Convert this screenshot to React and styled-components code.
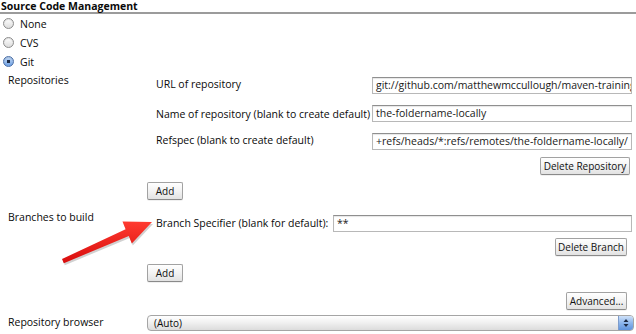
import React from "react";
import styled, { createGlobalStyle } from "styled-components";

const GlobalStyle = createGlobalStyle`
  html, body {
    margin: 0;
    padding: 0;
    background: #fff;
  }
  body {
    font-family: "Open Sans", "DejaVu Sans", sans-serif;
    font-size: 10.5px;
    color: #0a0a0a;
  }
`;

const Page = styled.div`
  position: relative;
  width: 636px;
  height: 334px;
  overflow: hidden;
  display: flex;
  flex-direction: column;
`;

const Header = styled.div`
  font-weight: 700;
  font-size: 10.5px;
  line-height: 12px;
  padding-left: 1px;
  border-bottom: 2px solid #9b9b9b;
`;

const RadioList = styled.div`
  display: flex;
  flex-direction: column;
`;

const RadioRow = styled.label`
  display: flex;
  align-items: center;
  gap: 6px;
  height: 19px;
  padding-left: 3px;
`;

const RadioDot = styled.span`
  width: 11px;
  height: 11px;
  box-sizing: border-box;
  border-radius: 50%;
  border: 1px solid ${(p) => (p.$on ? "#4a6fa8" : "#8d8d8d")};
  background: ${(p) =>
    p.$on
      ? "radial-gradient(circle at 50% 50%, #1c2a44 0 1.6px, transparent 2px), linear-gradient(#c4daf6, #6d9fe2)"
      : "linear-gradient(#ffffff, #dcdcdc)"};
  box-shadow: inset 0 1px 1px rgba(0, 0, 0, 0.12);
`;

const Section = styled.div`
  display: grid;
  grid-template-columns: 147px 1fr;
  padding-right: 4px;
`;

const SideLabel = styled.div`
  padding-left: 8px;
  padding-top: ${(p) => p.$top || 0}px;
  line-height: 14px;
  align-self: start;
`;

const Content = styled.div`
  display: flex;
  flex-direction: column;
  padding-top: ${(p) => p.$top || 0}px;
`;

const FieldTable = styled.div`
  display: grid;
  grid-template-columns: ${(p) => p.$label}px 1fr;
  row-gap: 11px;
  padding-left: 9px;
  align-items: center;
`;

const FieldLabel = styled.div`
  line-height: 14px;
  white-space: nowrap;
  margin-top: ${(p) => p.$shift || 0}px;
`;

const TextInput = styled.div`
  height: 17px;
  box-sizing: border-box;
  border: 1px solid #b8b8b8;
  border-top-color: #8f8f8f;
  box-shadow: inset 0 1px 1px rgba(0, 0, 0, 0.1);
  background: #fff;
  padding: 0 3px;
  line-height: 15px;
  font-size: 10.5px;
  color: #1a1a1a;
  white-space: nowrap;
  overflow: hidden;
`;

const ButtonRow = styled.div`
  display: flex;
  justify-content: ${(p) => (p.$end ? "flex-end" : "flex-start")};
  margin-top: ${(p) => p.$top || 0}px;
  padding-right: ${(p) => p.$right || 0}px;
`;

const Button = styled.button`
  width: ${(p) => p.$w}px;
  height: 18px;
  padding: 0;
  border: 1px solid #a2a2a2;
  border-bottom-color: #8a8a8a;
  border-radius: 2px;
  background: linear-gradient(#ffffff 0%, #f3f3f3 50%, #e2e2e2 100%);
  box-shadow: 0 1px 0 rgba(0, 0, 0, 0.06);
  font-family: "Open Sans", "DejaVu Sans", sans-serif;
  font-size: 10px;
  color: #111;
  line-height: 16px;
`;

const BrowserRow = styled.div`
  display: grid;
  grid-template-columns: 147px 1fr;
  align-items: center;
  margin-top: 5px;
  padding-right: 2px;
`;

const SelectBox = styled.div`
  height: 16px;
  box-sizing: border-box;
  border: 1px solid #a5a5a5;
  border-radius: 4px;
  background: linear-gradient(#ffffff 0%, #f1f1f1 45%, #dcdcdc 100%);
  display: flex;
  align-items: center;
  padding-left: 6px;
  font-size: 10px;
  line-height: 14px;
  overflow: hidden;
`;

const SelectText = styled.span`
  flex: 1;
`;

const Stepper = styled.span`
  width: 14px;
  height: 100%;
  border-left: 1px solid #7d9ccc;
  background: linear-gradient(#cfe1f8 0%, #8db6ec 50%, #5f93dc 100%);
  display: flex;
  align-items: center;
  justify-content: center;
`;

const ArrowLayer = styled.svg`
  position: absolute;
  left: 0;
  top: 0;
  pointer-events: none;
`;

const arrowPoints =
  "152,222 122.5,221.5 125.6,229.3 62,259 63.8,263.2 128.8,236 131.8,243.5";

const Field = ({ label, value, shift }) => (
  <>
    <FieldLabel $shift={shift}>{label}</FieldLabel>
    <TextInput>{value}</TextInput>
  </>
);

export default function App() {
  return (
    <Page>
      <GlobalStyle />
      <Header>Source Code Management</Header>
      <RadioList>
        <RadioRow>
          <RadioDot />
          None
        </RadioRow>
        <RadioRow>
          <RadioDot />
          CVS
        </RadioRow>
        <RadioRow>
          <RadioDot $on />
          Git
        </RadioRow>
      </RadioList>

      <Section>
        <SideLabel $top={2}>Repositories</SideLabel>
        <Content $top={6}>
          <FieldTable $label={216}>
            <Field label="URL of repository" value="git://github.com/matthewmccullough/maven-training" shift={-3} />
            <Field label="Name of repository (blank to create default)" value="the-foldername-locally" />
            <Field label="Refspec (blank to create default)" value="+refs/heads/*:refs/remotes/the-foldername-locally/" shift={-3} />
          </FieldTable>
          <ButtonRow $end $top={7} $right={2}>
            <Button $w={90}>Delete Repository</Button>
          </ButtonRow>
          <ButtonRow $top={7}>
            <Button $w={36}>Add</Button>
          </ButtonRow>
        </Content>

        <SideLabel $top={10}>Branches to build</SideLabel>
        <Content $top={15}>
          <FieldTable $label={177}>
            <Field label="Branch Specifier (blank for default):" value="**" shift={-1} />
          </FieldTable>
          <ButtonRow $end $top={6} $right={5}>
            <Button $w={72}>Delete Branch</Button>
          </ButtonRow>
          <ButtonRow $top={8}>
            <Button $w={36}>Add</Button>
          </ButtonRow>
        </Content>
      </Section>

      <ButtonRow $end $top={10} $right={9}>
        <Button $w={61}>Advanced...</Button>
      </ButtonRow>

      <BrowserRow>
        <SideLabel>Repository browser</SideLabel>
        <SelectBox>
          <SelectText>(Auto)</SelectText>
          <Stepper>
            <svg width="6" height="10" viewBox="0 0 6 10">
              <path d="M3 1 L5.5 4 H0.5 Z M3 9 L5.5 6 H0.5 Z" fill="#1d2b45" />
            </svg>
          </Stepper>
        </SelectBox>
      </BrowserRow>

      <ArrowLayer width="636" height="334" viewBox="0 0 636 334">
        <defs>
          <linearGradient id="redArrow" x1="0" y1="0" x2="0" y2="1">
            <stop offset="0" stopColor="#ff3b30" />
            <stop offset="1" stopColor="#d80d0d" />
          </linearGradient>
        </defs>
        <polygon points={arrowPoints} fill="#000" opacity="0.18" transform="translate(1,2)" />
        <polygon points={arrowPoints} fill="url(#redArrow)" />
      </ArrowLayer>
    </Page>
  );
}
